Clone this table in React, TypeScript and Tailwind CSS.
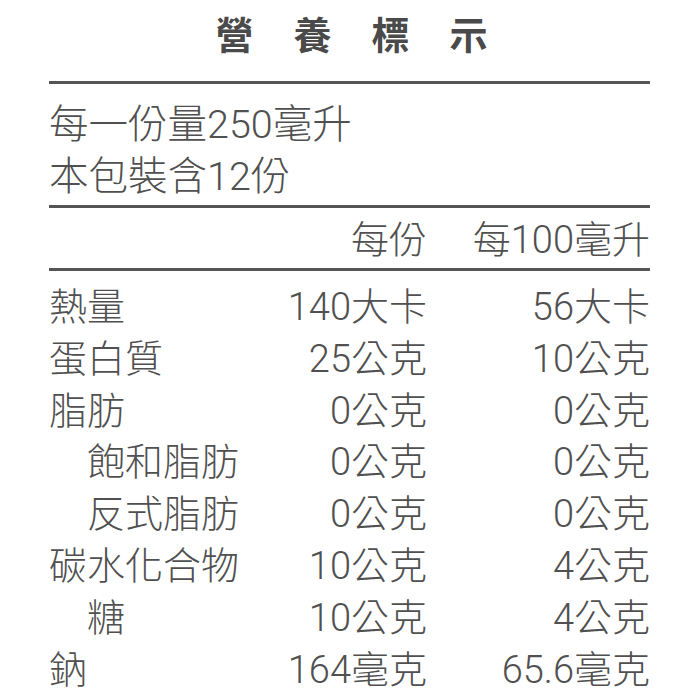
import React from "react";

const rows: { label: string; indent?: boolean; a: string; b: string }[] = [
  { label: "熱量", a: "140大卡", b: "56大卡" },
  { label: "蛋白質", a: "25公克", b: "10公克" },
  { label: "脂肪", a: "0公克", b: "0公克" },
  { label: "飽和脂肪", indent: true, a: "0公克", b: "0公克" },
  { label: "反式脂肪", indent: true, a: "0公克", b: "0公克" },
  { label: "碳水化合物", a: "10公克", b: "4公克" },
  { label: "糖", indent: true, a: "10公克", b: "4公克" },
  { label: "鈉", a: "164毫克", b: "65.6毫克" },
];

export default function App() {
  return (
    <div
      className="w-[699px] h-[699px] bg-white overflow-hidden text-[#505050]"
      style={{ fontFamily: 'Roboto, "Noto Sans CJK TC", "Noto Sans", sans-serif' }}
    >
      <div className="h-[81px] flex justify-center pt-[14px] pl-[44px]">
        <h1
          className="text-[38px] leading-[38px] font-bold tracking-[40px] text-[#4a4a4a]"
          style={{ fontFamily: '"Noto Sans CJK TC", sans-serif' }}
        >
          營養標示
        </h1>
      </div>
      <div className="px-[49px]">
        <div className="h-[3px] bg-[#555]" />
        <div className="pt-[15px] pb-[2px] text-[39.5px] leading-[52px] font-light whitespace-nowrap">
          <div>每一份量250毫升</div>
          <div>本包裝含12份</div>
        </div>
        <div className="h-[3px] bg-[#555]" />
        <div className="h-[60px] pt-[3px] grid grid-cols-[200px_178px_223px] items-center text-[38px] leading-[52px] font-light whitespace-nowrap">
          <div />
          <div className="text-right">每份</div>
          <div className="text-right">每100毫升</div>
        </div>
        <div className="h-[3px] bg-[#555]" />
        <div className="pt-[10px] text-[38px] leading-[52px] font-light whitespace-nowrap">
          {rows.map((r) => (
            <div key={r.label} className="grid grid-cols-[200px_178px_223px] h-[51.8px] items-center">
              <div className={r.indent ? "pl-[38px]" : ""}>{r.label}</div>
              <div className="text-right">{r.a}</div>
              <div className="text-right">{r.b}</div>
            </div>
          ))}
        </div>
      </div>
    </div>
  );
}
